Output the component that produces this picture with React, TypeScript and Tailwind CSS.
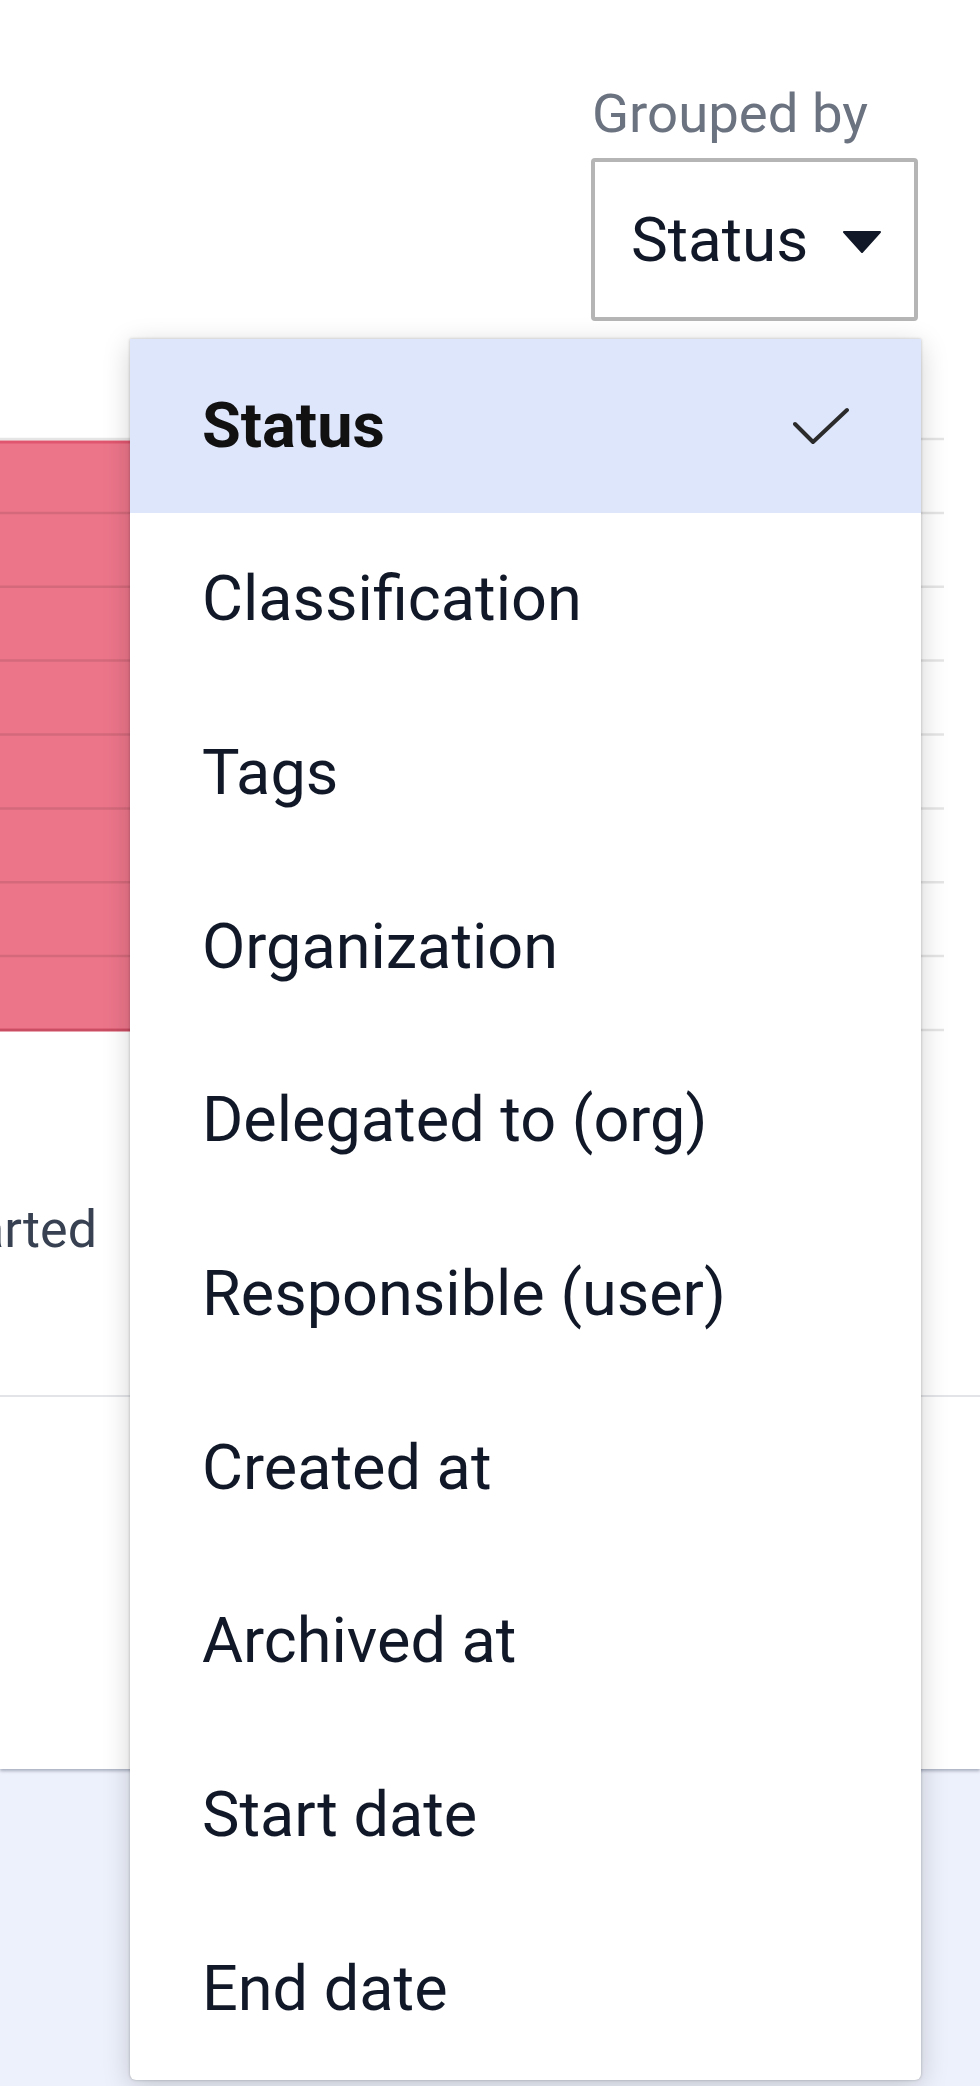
import React from "react";

const items = [
  "Status",
  "Classification",
  "Tags",
  "Organization",
  "Delegated to (org)",
  "Responsible (user)",
  "Created at",
  "Archived at",
  "Start date",
  "End date",
];

const gridYs = [19, 92.9, 166.75, 240.6, 314.5, 388.4, 462.25, 536.1, 610];

export default function App() {
  return (
    <div className="relative w-[980px] h-[2086px] overflow-hidden bg-[#edf1fb] font-['Roboto','Liberation_Sans',sans-serif]">
      <div className="h-[1769px] bg-white shadow-[0_2px_3px_rgba(40,50,80,0.35)] flex flex-col">
        <div className="flex justify-end pr-[62px] pt-[81px]">
          <div className="w-[327px] flex flex-col">
            <span className="pl-[1px] text-[54.5px] leading-[64px] text-[#6b7280]">Grouped by</span>
            <div className="mt-[13px] h-[163px] border-[4px] border-[#b5b5b5] rounded-[4px] flex items-center justify-between pl-[36px] pr-[33px]">
              <span className="text-[62px] text-[#111827]">Status</span>
              <svg width="38" height="22" viewBox="0 0 38 22" className="mt-[4px]">
                <polygon points="1,1 37,1 19,21" fill="#111827" stroke="#111827" strokeWidth="2" strokeLinejoin="round" />
              </svg>
            </div>
          </div>
        </div>

        <svg width="980" height="630" viewBox="0 0 980 630" className="block mt-[99px]">
          <rect x="-10" y="22" width="600" height="588" fill="#ec758a" stroke="#e0566f" strokeWidth="3" />
          {gridYs.map((y, i) => (
            <line key={i} x1="0" x2="944" y1={y} y2={y} stroke="rgba(0,0,0,0.1)" strokeWidth="2.5" />
          ))}
        </svg>

        <div className="mt-[149px] w-[97px] flex justify-end whitespace-nowrap">
          <span className="text-[52px] leading-[61px] text-[#374151]">Not started</span>
        </div>

        <div className="mt-[135px] h-[2px] bg-[#e3e4e8]" />
      </div>

      <div className="absolute left-[130px] top-[339px] w-[791px] bg-white rounded-b-[6px] pb-[4px] shadow-[0_0_3px_rgba(0,0,0,0.25),0_6px_28px_rgba(0,0,0,0.18)]">
        {items.map((it, i) => (
          <div
            key={it}
            className={
              i === 0
                ? "h-[173.7px] flex items-center justify-between pl-[72px] pr-[72px] bg-[#dee6fc]"
                : "h-[173.7px] flex items-center justify-between pl-[72px] pr-[72px]"
            }
          >
            <span className={i === 0 ? "text-[63px] font-bold text-[#111111]" : "text-[63px] text-[#111827]"}>{it}</span>
            {i === 0 && (
              <svg width="56" height="40" viewBox="0 0 56 40">
                <path d="M2 18 L20 36 L54 4" fill="none" stroke="#2b2b2b" strokeWidth="4" strokeLinecap="round" strokeLinejoin="round" />
              </svg>
            )}
          </div>
        ))}
      </div>
    </div>
  );
}
